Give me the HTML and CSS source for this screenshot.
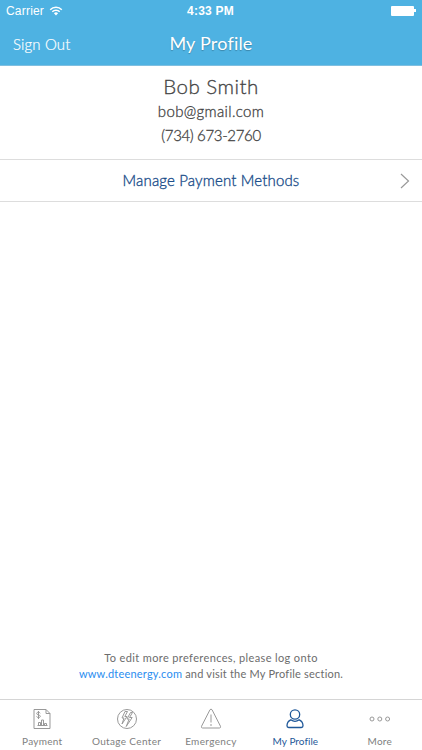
FILE: index.html
```html
<!DOCTYPE html>
<html lang="en">
  <head>
    <meta charset="UTF-8" />
    <meta name="viewport" content="width=device-width, initial-scale=1.0" />
    <title>My Profile</title>
    <link rel="stylesheet" href="styles.css">
  </head>
  <body>
    <div class="app">
      <header class="header">
        <div class="status-bar">
          <div class="carrier">
            <span>Carrier</span>
            <svg class="wifi" viewBox="0 0 14 10">
              <path d="M1.2 3.7a8.2 8.2 0 0 1 11.6 0M3.3 5.8a5.2 5.2 0 0 1 7.4 0" fill="none" stroke="#fff" stroke-width="1.5" />
              <path d="M4.9 7.2a3 3 0 0 1 4.2 0L7 9.4z" fill="#fff" />
            </svg>
          </div>
          <div class="clock">4:33 PM</div>
          <div class="battery"></div>
        </div>
        <nav class="nav-bar">
          <a class="sign-out">Sign Out</a>
          <h1>My Profile</h1>
        </nav>
      </header>

      <main class="content">
        <section class="profile">
          <h2>Bob Smith</h2>
          <p class="email">bob@gmail.com</p>
          <p class="phone">(734) 673-2760</p>
        </section>

        <a class="menu-row">
          <span>Manage Payment Methods</span>
          <svg class="chevron" viewBox="0 0 10 16">
            <path d="M1 1l7.500 7L1 15" />
          </svg>
        </a>

        <div class="note">
          <p class="note-top">To edit more preferences, please log onto</p>
          <p class="note-bottom"><a>www.dteenergy.com</a> and visit the My Profile section.</p>
        </div>
      </main>

      <footer class="tab-bar">
        <a class="tab payment">
          <svg viewBox="0 0 24 24">
            <path d="M4 2.500h12l4 4v15H4zM16 2.500v4h4" />
            <path d="M10.200 6.300c-.3-.8-1-1.100-1.800-1.100-1 0-1.700.5-1.700 1.300 0 1.900 3.600.9 3.600 2.800 0 .9-.8 1.300-1.800 1.300-.9 0-1.600-.4-1.900-1.200M8.500 4v8" />
            <path d="M7.500 18.500h10M8.500 18.500v-3h2v3M11.500 18.500v-5.500h2v5.500M14.500 18.500v-2h2v2" />
          </svg>
          <span>Payment</span>
        </a>
        <a class="tab outage">
          <svg viewBox="0 0 24 24">
            <circle cx="12" cy="12" r="9.500" />
            <path d="M10 4.500l-3 6.500h2l-2 6 5-7.500H9.800l2.700-5zM15.500 5.500l-3.500 6.500h2.200l-3 7.500 6-9h-2.700l3-5z" />
          </svg>
          <span>Outage Center</span>
        </a>
        <a class="tab emergency">
          <svg viewBox="0 0 24 24">
            <path d="M11 2.700q1-1.200 2 0l8.500 16.600q.4 1.700-1.100 1.700H3.600q-1.500 0-1.100-1.700z" />
            <path d="M12 7.500v8M12 17v2" />
          </svg>
          <span>Emergency</span>
        </a>
        <a class="tab profile-tab active">
          <svg viewBox="0 0 24 24">
            <circle cx="12" cy="7.500" r="4.700" />
            <path d="M7.800 12.800C5 14 4 16.200 4 18.800q0 1.700 1.700 1.700h12.600q1.700 0 1.700-1.700c0-2.600-1-4.800-3.800-6Q12 16 7.800 12.800z" />
          </svg>
          <span>My Profile</span>
        </a>
        <a class="tab more">
          <svg viewBox="0 0 24 24">
            <circle cx="4" cy="12" r="2" />
            <circle cx="11.800" cy="12" r="2" />
            <circle cx="19.600" cy="12" r="2" />
          </svg>
          <span>More</span>
        </a>
      </footer>
    </div>
  </body>
</html>
```

FILE: styles.css
```css
body {
  margin: 0;
  background: #fff;
  font-family: Lato, "Liberation Sans", sans-serif;
  color: #444;
}

h1,
h2,
p {
  margin: 0;
  font-weight: 400;
}

.app {
  display: flex;
  flex-direction: column;
  height: 750px;
}

.header {
  box-sizing: border-box;
  height: 66px;
  background: #4eb2e2;
  border-bottom: 1px solid #7fbfe0;
  color: #fff;
}

.status-bar {
  display: grid;
  grid-template-columns: 1fr auto 1fr;
  align-items: center;
  height: 22px;
  padding: 0 7px 0 6px;
  font-family: "Liberation Sans", sans-serif;
  font-size: 12px;
}

.carrier {
  display: flex;
  align-items: center;
  gap: 5px;
  letter-spacing: 0.2px;
}

.wifi {
  width: 14px;
  height: 10px;
}

.clock {
  font-weight: 700;
  letter-spacing: 0.2px;
}

.battery {
  position: relative;
  justify-self: end;
  width: 23px;
  height: 10px;
  margin-right: 1px;
  border-radius: 1px;
  background: #fff;
}

.battery::after {
  content: "";
  position: absolute;
  top: 3px;
  right: -2px;
  width: 2px;
  height: 3px;
  background: #fff;
}

.nav-bar {
  display: grid;
  grid-template-columns: 1fr auto 1fr;
  align-items: center;
  height: 43px;
  padding: 0 13px;
}

.sign-out {
  font-size: 15px;
  font-weight: 300;
  letter-spacing: 0.15px;
  -webkit-text-stroke: 0.2px;
}

.nav-bar h1 {
  padding-bottom: 2px;
  font-size: 18px;
  line-height: 40px;
  letter-spacing: 0.2px;
  text-shadow: 0 1px 1px rgba(0, 0, 0, 0.25);
}

.content {
  display: flex;
  flex: 1;
  flex-direction: column;
}

.profile {
  height: 93px;
  text-align: center;
}

.profile h2 {
  padding-top: 7px;
  font-size: 20.5px;
  font-weight: 300;
  line-height: 26px;
  letter-spacing: 0.5px;
  -webkit-text-stroke: 0.3px;
}

.email,
.phone {
  font-size: 15px;
  font-weight: 300;
  line-height: 24px;
  -webkit-text-stroke: 0.3px;
}

.email {
  letter-spacing: 0.35px;
}

.phone {
  letter-spacing: -0.35px;
}

.menu-row {
  display: flex;
  align-items: center;
  height: 41px;
  border-top: 1px solid #ddd;
  border-bottom: 1px solid #ddd;
  color: #1d4f8b;
  font-size: 15px;
  font-weight: 300;
  letter-spacing: 0.15px;
}

.menu-row span {
  flex: 1;
  padding: 0 0 2px 22px;
  text-align: center;
  -webkit-text-stroke: 0.35px;
}

.chevron {
  width: 10px;
  height: 16px;
  margin-right: 12px;
  fill: none;
  stroke: #999;
  stroke-width: 1.2;
}

.note {
  margin-top: auto;
  padding-bottom: 17px;
  color: #6c6c6c;
  font-size: 11px;
  line-height: 16px;
  text-align: center;
}

.note-top {
  letter-spacing: 0.37px;
}

.note-bottom {
  letter-spacing: 0.2px;
}

.note a {
  color: #2a8df0;
}

.tab-bar {
  display: grid;
  grid-template-columns: repeat(5, 1fr);
  box-sizing: border-box;
  height: 51px;
  border-top: 1px solid #d5d5d5;
}

.tab {
  display: flex;
  flex-direction: column;
  align-items: center;
  padding-top: 7px;
  color: #808080;
  font-size: 10px;
  line-height: 14px;
  letter-spacing: 0.25px;
  white-space: nowrap;
}

.tab svg {
  width: 24px;
  height: 24px;
  margin-bottom: 3px;
  fill: none;
  stroke: #999;
  stroke-width: 1;
}

.outage,
.emergency {
  letter-spacing: 0.35px;
}

.tab.active {
  color: #1f5899;
  letter-spacing: 0.05px;
}

.tab.active svg {
  stroke: #1f5899;
  stroke-width: 1.3;
}
```
